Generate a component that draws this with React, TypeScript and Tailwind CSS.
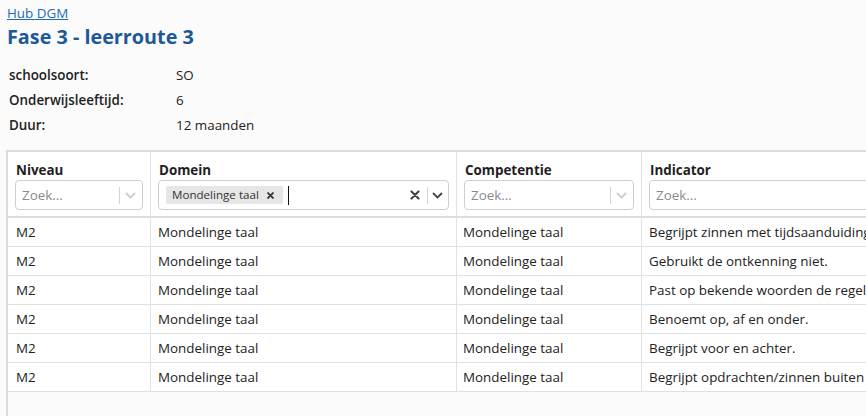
const rows = [
  { niveau: "M2", domein: "Mondelinge taal", competentie: "Mondelinge taal", indicator: "Begrijpt zinnen met tijdsaanduidingen zoals vandaag, morgen en gisteren." },
  { niveau: "M2", domein: "Mondelinge taal", competentie: "Mondelinge taal", indicator: "Gebruikt de ontkenning niet." },
  { niveau: "M2", domein: "Mondelinge taal", competentie: "Mondelinge taal", indicator: "Past op bekende woorden de regelmatige meervoudsvorming toe." },
  { niveau: "M2", domein: "Mondelinge taal", competentie: "Mondelinge taal", indicator: "Benoemt op, af en onder." },
  { niveau: "M2", domein: "Mondelinge taal", competentie: "Mondelinge taal", indicator: "Begrijpt voor en achter." },
  { niveau: "M2", domein: "Mondelinge taal", competentie: "Mondelinge taal", indicator: "Begrijpt opdrachten/zinnen buiten de directe context." },
];

const info = [
  ["schoolsoort:", "SO"],
  ["Onderwijsleeftijd:", "6"],
  ["Duur:", "12 maanden"],
];

const cols = "grid grid-cols-[143px_306px_185px_420px]";

function Chevron({ dark }: { dark?: boolean }) {
  return (
    <svg width="11" height="7" viewBox="0 0 11 7" className="shrink-0">
      <polyline points="1,1 5.5,5.5 10,1" fill="none" stroke={dark ? "#444" : "#ccc"} strokeWidth="1.8" />
    </svg>
  );
}

function Cross({ size, width, color }: { size: number; width: number; color: string }) {
  return (
    <svg width={size} height={size} viewBox="0 0 10 10" className="shrink-0">
      <path d="M1.5 1.5 L8.5 8.5 M8.5 1.5 L1.5 8.5" stroke={color} strokeWidth={width} strokeLinecap="round" />
    </svg>
  );
}

function SearchSelect({ arrow = true }: { arrow?: boolean }) {
  return (
    <div className="flex h-[30px] items-center rounded-[4px] border border-[#cfcfcf] bg-white pl-[6px]">
      <span className="flex-1 text-[#8a8a8a]">Zoek...</span>
      {arrow ? (
        <div className="flex items-center pr-[6px]">
          <span className="mr-[5px] h-[17px] w-px bg-[#d4d4d4]" />
          <Chevron />
        </div>
      ) : null}
    </div>
  );
}

function DomeinSelect() {
  return (
    <div className="flex h-[30px] items-center rounded-[4px] border border-[#cfcfcf] bg-white pl-[7px]">
      <span className="flex h-[18px] items-center rounded-[2px] bg-[#e6e6e6] pl-[6px] pr-[9px] text-[11.6px] text-[#333]">
        Mondelinge taal
        <span className="ml-[8px] flex items-center">
          <Cross size={7} width={2.6} color="#333" />
        </span>
      </span>
      <span className="ml-[5px] h-[19px] w-px bg-[#111]" />
      <div className="flex-1" />
      <div className="flex items-center pr-[5px]">
        <Cross size={10} width={2.2} color="#444" />
        <span className="ml-[7px] mr-[4px] h-[17px] w-px bg-[#d4d4d4]" />
        <Chevron dark />
      </div>
    </div>
  );
}

export default function App() {
  return (
    <div className="flex h-screen flex-col overflow-hidden bg-[#fbfbfb] font-['Segoe_UI','Open_Sans',sans-serif] text-[13.4px] text-[#222]">
      <div className="px-[7px] pt-[3px]">
        <a href="#" className="block h-[20px] leading-[20px] text-[#1f6db0] underline">
          Hub DGM
        </a>
        <h1 className="h-[28px] text-[19.8px] font-bold leading-[28px] text-[#1b5a97]">Fase 3 - leerroute 3</h1>
        <div className="mt-[12px] grid grid-cols-[167px_1fr] pl-[2px]">
          {info.map(([label, value]) => (
            <div key={label} className="contents">
              <span className="h-[25px] font-semibold leading-[25px]">{label}</span>
              <span className="h-[25px] leading-[25px]">{value}</span>
            </div>
          ))}
        </div>
      </div>

      <div className="ml-[6px] mt-[12px] flex-1 border-l-2 border-t-2 border-[#dcdcdc]">
        <div className={`${cols} border-b-2 border-[#dcdcdc] bg-white`}>
          {["Niveau", "Domein", "Competentie", "Indicator"].map((title, i) => (
            <div key={title} className="border-r border-[#e2e2e2] px-[7px] pb-[6px] pt-[8px]">
              <div className="h-[20px] pl-px font-bold leading-[20px] text-[#1e1e1e]">{title}</div>
              {i === 1 ? <DomeinSelect /> : <SearchSelect arrow={i !== 3} />}
            </div>
          ))}
        </div>
        {rows.map((row, idx) => (
          <div key={idx} className={`${cols} border-b border-[#e0e0e0] bg-white`}>
            <div className="h-[28px] truncate border-r border-[#e2e2e2] px-[8px] leading-[28px]">{row.niveau}</div>
            <div className="h-[28px] truncate border-r border-[#e2e2e2] px-[7px] leading-[28px]">{row.domein}</div>
            <div className="h-[28px] truncate border-r border-[#e2e2e2] px-[6px] leading-[28px]">{row.competentie}</div>
            <div className="h-[28px] overflow-hidden whitespace-nowrap border-r border-[#e2e2e2] px-[7px] leading-[28px]">
              {row.indicator}
            </div>
          </div>
        ))}
      </div>
    </div>
  );
}
